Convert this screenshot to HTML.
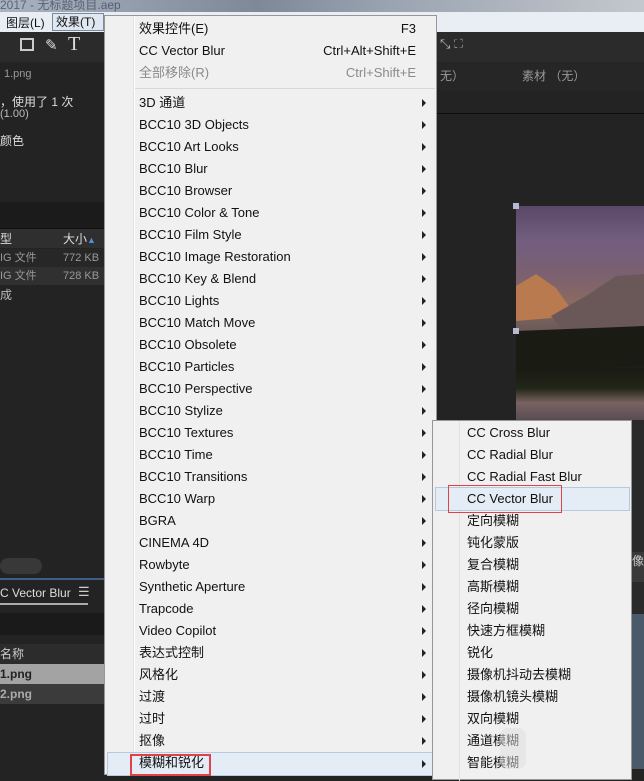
<!DOCTYPE html><html><head><meta charset="utf-8"><style>
*{margin:0;padding:0;box-sizing:border-box}
body{width:644px;height:769px;overflow:hidden;background:#232323;position:relative;font-family:"Liberation Sans","Noto Sans CJK SC",sans-serif;font-size:13px}
.a{position:absolute}
.menu{position:absolute;background:#f0f0f0;border:1px solid #979797}
.it{position:absolute;left:34px;height:22px;line-height:22px;color:#111;white-space:nowrap}
.ar{position:absolute;right:10px;width:0;height:0;border-left:4px solid #222;border-top:4px solid transparent;border-bottom:4px solid transparent}
.sc{position:absolute;right:20px;color:#111}
</style></head><body>
<div class="a" style="left:0;top:0;width:644px;height:12px;background:linear-gradient(90deg,#a9b3c0,#7e8898 40%,#9aa3b0 60%,#c3c8ce)"></div>
<div class="a" style="left:0;top:-4px;color:#3a4458;font-size:12px;opacity:.7">2017 - 无标题项目.aep</div>
<div class="a" style="left:0;top:12px;width:644px;height:20px;background:#e9eef5"></div>
<div class="a" style="left:6px;top:14px;font-size:12px;color:#111">图层(L)</div>
<div class="a" style="left:52px;top:13px;width:52px;height:18px;border:1px solid #7a8a9e;background:#dfe7f1;font-size:12px;color:#111;padding-left:3px;line-height:16px">效果(T)</div>
<div class="a" style="left:0;top:32px;width:644px;height:30px;background:#2b2b2b"></div>
<div class="a" style="left:20px;top:38px;width:14px;height:13px;border:2px solid #ccc"></div>
<div class="a" style="left:68px;top:33px;color:#ddd;font-size:20px;font-family:'Liberation Serif',serif">T</div>
<div class="a" style="left:45px;top:36px;color:#ddd;font-size:15px">✎</div>
<div class="a" style="left:440px;top:36px;color:#bbb;font-size:13px">⤡ ⛶</div>
<div class="a" style="left:0;top:62px;width:105px;height:140px;background:#232323"></div>
<div class="a" style="left:4px;top:68px;color:#999;font-size:11px">1.png</div>
<div class="a" style="left:0;top:93px;color:#ddd;font-size:12px">，使用了 1 次</div>
<div class="a" style="left:0;top:108px;color:#bbb;font-size:11px">(1.00)</div>
<div class="a" style="left:0;top:132px;color:#ddd;font-size:12px">颜色</div>
<div class="a" style="left:0;top:202px;width:105px;height:26px;background:#1b1b1b"></div>
<div class="a" style="left:0;top:228px;width:105px;height:20px;background:#2f2f2f;border-top:1px solid #111"></div>
<div class="a" style="left:0;top:230px;color:#ddd;font-size:12px">型</div>
<div class="a" style="left:63px;top:230px;color:#ddd;font-size:12px">大小<span style="color:#4a8fd8;font-size:9px">▲</span></div>
<div class="a" style="left:0;top:249px;width:105px;height:18px;background:#272727;color:#999;font-size:11px;line-height:18px">IG 文件<span style="position:absolute;left:63px">772 KB</span></div>
<div class="a" style="left:0;top:267px;width:105px;height:18px;background:#303030;color:#999;font-size:11px;line-height:18px">IG 文件<span style="position:absolute;left:63px">728 KB</span></div>
<div class="a" style="left:0;top:286px;color:#bbb;font-size:12px">成</div>
<div class="a" style="left:0;top:558px;width:42px;height:16px;border-radius:8px;background:#383838"></div>
<div class="a" style="left:0;top:578px;width:105px;height:2px;background:#3d5f85"></div>
<div class="a" style="left:0;top:586px;color:#ddd;font-size:12px">C Vector Blur</div>
<div class="a" style="left:78px;top:584px;color:#ccc;font-size:13px">☰</div>
<div class="a" style="left:0;top:603px;width:88px;height:2px;background:#aaa"></div>
<div class="a" style="left:0;top:613px;width:105px;height:22px;background:#1a1a1a"></div>
<div class="a" style="left:0;top:644px;width:105px;height:20px;background:#2c2c2c;color:#ccc;font-size:12px;line-height:20px">名称</div>
<div class="a" style="left:0;top:664px;width:105px;height:20px;background:#a3a3a3;color:#222;font-size:12px;font-weight:bold;line-height:20px">1.png</div>
<div class="a" style="left:0;top:684px;width:105px;height:20px;background:#3b3b3b;color:#aaa;font-size:12px;font-weight:bold;line-height:20px">2.png</div>
<div class="a" style="left:437px;top:62px;width:207px;height:28px;background:#262626"></div>
<div class="a" style="left:440px;top:67px;color:#999;font-size:12px">无）</div>
<div class="a" style="left:522px;top:67px;color:#999;font-size:12px">素材 （无）</div>
<div class="a" style="left:437px;top:113px;width:207px;height:1px;background:#0c0c0c"></div>
<div class="a" style="left:516px;top:206px;width:128px;height:240px;background:linear-gradient(180deg,#5a4868 0%,#735e80 15%,#7a6070 28%,#8a6a62 40%,#6a5a58 52%,#4a4240 60%,#1a1a14 68%,#222618 76%,#7a6260 82%,#4a4450 92%,#3a3844 100%)"></div>
<svg class="a" style="left:516px;top:206px" width="128" height="240"><polygon points="0,80 20,68 40,82 60,110 0,115" fill="#b87a4e"/><polygon points="35,110 70,90 100,70 128,68 128,140 60,140" fill="#6a5858"/><polygon points="0,125 128,120 128,160 0,165" fill="#1a1c14"/></svg>
<div class="a" style="left:513px;top:203px;width:6px;height:6px;background:#b8b8d0"></div>
<div class="a" style="left:513px;top:328px;width:6px;height:6px;background:#b8b8d0"></div>
<div class="a" style="left:632px;top:420px;width:12px;height:349px;background:#2a2a2a"></div>
<div class="a" style="left:632px;top:552px;width:12px;height:30px;background:#3a3a3a;color:#ccc;font-size:12px">像</div>
<div class="a" style="left:632px;top:614px;width:12px;height:155px;background:#4a5a6a"></div>
<div class="menu" style="left:104px;top:15px;width:333px;height:760px">
<div class="a" style="left:28px;top:0;width:1px;height:760px;background:#e2e2e2"></div>
<div class="a" style="left:29px;top:0;width:1px;height:760px;background:#fff"></div>
<div class="a" style="left:30px;top:72px;width:300px;height:1px;background:#d8d8d8"></div>
<div class="it" style="top:2px">效果控件(E)</div><div class="sc" style="top:5px">F3</div>
<div class="it" style="top:24px">CC Vector Blur</div><div class="sc" style="top:27px">Ctrl+Alt+Shift+E</div>
<div class="it" style="top:46px;color:#8a8a8a">全部移除(R)</div><div class="sc" style="top:49px;color:#8a8a8a">Ctrl+Shift+E</div>
<div id="mm"></div>
<div class="a" style="left:2px;top:736px;width:327px;height:24px;background:#e4ecf5;border:1px solid #b6c9de"></div>
<div class="a" style="left:25px;top:738px;width:81px;height:22px;border:2px solid #e0424a"></div>
<div class="it" style="top:736px">模糊和锐化</div><div class="ar" style="top:744px"></div>
</div>
<div class="menu" style="left:432px;top:420px;width:200px;height:360px">
<div class="a" style="left:26px;top:0;width:1px;height:360px;background:#e2e2e2"></div>
<div class="a" style="left:2px;top:66px;width:195px;height:24px;background:#e4ecf5;border:1px solid #b6c9de"></div>
<div class="a" style="left:15px;top:64px;width:114px;height:28px;border:1.5px solid #e0424a"></div>
<div id="sm"></div>
</div>
<div class="a" style="left:500px;top:728px;width:26px;height:41px;background:#ddd;border-radius:8px;opacity:.5"></div>
<script>
var m=["3D 通道","BCC10 3D Objects","BCC10 Art Looks","BCC10 Blur","BCC10 Browser","BCC10 Color & Tone","BCC10 Film Style","BCC10 Image Restoration","BCC10 Key & Blend","BCC10 Lights","BCC10 Match Move","BCC10 Obsolete","BCC10 Particles","BCC10 Perspective","BCC10 Stylize","BCC10 Textures","BCC10 Time","BCC10 Transitions","BCC10 Warp","BGRA","CINEMA 4D","Rowbyte","Synthetic Aperture","Trapcode","Video Copilot","表达式控制","风格化","过渡","过时","抠像"];
var h="";m.forEach(function(t,i){var y=76+i*22;h+='<div class="it" style="top:'+y+'px">'+t.replace("&","&amp;")+'</div><div class="ar" style="top:'+(y+7)+'px"></div>'});
document.getElementById("mm").outerHTML=h;
var s=["CC Cross Blur","CC Radial Blur","CC Radial Fast Blur","CC Vector Blur","定向模糊","钝化蒙版","复合模糊","高斯模糊","径向模糊","快速方框模糊","锐化","摄像机抖动去模糊","摄像机镜头模糊","双向模糊","通道模糊","智能模糊"];
h="";s.forEach(function(t,i){h+='<div class="it" style="left:34px;top:'+(1+i*22)+'px">'+t+'</div>'});
document.getElementById("sm").outerHTML=h;
</script>
</body></html>
